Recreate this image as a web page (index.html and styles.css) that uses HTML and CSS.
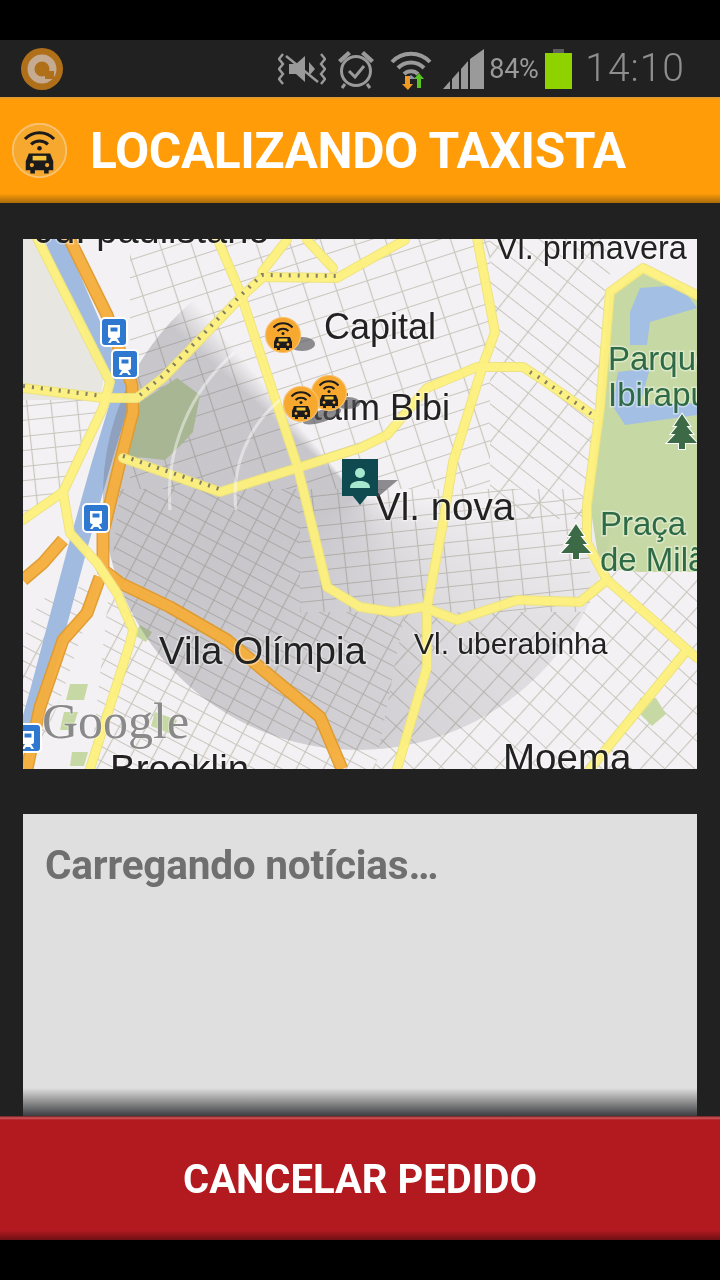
FILE: index.html
```html
<!DOCTYPE html>
<html lang="pt-BR">
<head>
<meta charset="utf-8">
<title>Localizando taxista</title>
<link rel="stylesheet" href="styles.css">
</head>
<body>
<div class="screen">
  <div class="blackbar"></div>
  <div class="status">
    <svg class="status-app" viewBox="0 0 44 44"><circle cx="22" cy="22" r="21" fill="#b0701a"/><circle cx="22" cy="22" r="11" fill="none" stroke="#c4ab92" stroke-width="7"/><path d="M25 24h9v8h-9z" fill="#b0701a"/></svg>
    <div class="status-right">
      <svg class="si si-mute" viewBox="0 0 48 34"><g fill="none" stroke="#9a9a9a" stroke-width="2.4"><path d="M5 2l-4 5 4 5-4 5 4 5-4 5 4 5"/><path d="M43 2l4 5-4 5 4 5-4 5 4 5-4 5"/><path d="M8 4l32 26"/></g><path d="M11 12h7l9-8v26l-9-8h-7z" fill="#9a9a9a"/><path d="M31 10l6 7-6 7z" fill="#9a9a9a"/></svg>
      <svg class="si si-alarm" viewBox="0 0 38 40"><g fill="none" stroke="#9a9a9a" stroke-width="3"><circle cx="19" cy="22" r="14.5"/><path d="M12 22l6 6 9-11"/><path d="M8 35l-3 4M30 35l3 4"/></g><path d="M1 11l10-9 3 3-10 9zM37 11l-10-9-3 3 10 9z" fill="#9a9a9a"/></svg>
      <svg class="si si-wifi" viewBox="0 0 42 42"><g fill="none" stroke="#9a9a9a" stroke-width="4"><path d="M2 14a26 26 0 0 1 38 0"/><path d="M8 20a18 18 0 0 1 26 0"/><path d="M14 26a10 10 0 0 1 14 0"/></g><path d="M21 27l-5 4h10z" fill="#8f8fb0"/><path d="M15 28h5v8h3l-5 6-6-6h3z" fill="#f09a23"/><path d="M27 40v-9h-3l5-6 5 6h-3v9z" fill="#58c322"/></svg>
      <svg class="si si-signal" viewBox="0 0 42 42"><path d="M0 41L7 33v8zM9 41V31l7-8v18zM18 41V21l7-8v28zM27 41V11l14-10v40z" fill="#9a9a9a"/></svg>
      <span class="battery-pct">84%</span>
      <div class="battery"><div class="battery-cap"></div><div class="battery-body"></div></div>
      <span class="clock">14:10</span>
    </div>
  </div>

  <header class="topbar">
    <svg class="topbar-icon" viewBox="-18 -18 36 36"><use href="#taxi" x="-18" y="-18" width="36" height="36"/></svg>
    <h1 class="topbar-title">LOCALIZANDO TAXISTA</h1>
  </header>

  <main class="content">
    <div class="map">
      <svg class="map-layer" viewBox="23 239 674 530">
        <defs>
          <pattern id="gridA" width="62" height="38" patternUnits="userSpaceOnUse" patternTransform="rotate(-18)"><path d="M0 .5H62M0 21.500H62M14.500 0V38M44.500 0V38" class="street"/></pattern>
          <pattern id="gridB" width="42" height="42" patternUnits="userSpaceOnUse" patternTransform="rotate(42)"><path d="M0 .5H42M0 22.500H42M.5 0V42M24.500 0V42" class="street"/></pattern>
          <pattern id="gridC" width="44" height="26" patternUnits="userSpaceOnUse" patternTransform="rotate(28)"><path d="M0 .5H44M0 13.500H44M6.500 0V26M30.500 0V26" class="street"/></pattern>
          <pattern id="gridD" width="38" height="32" patternUnits="userSpaceOnUse" patternTransform="rotate(38)"><path d="M0 .5H38M0 16.500H38M12.500 0V32" class="street"/></pattern>
          <pattern id="gridE" width="50" height="30" patternUnits="userSpaceOnUse" patternTransform="rotate(-6)"><path d="M0 .5H50M0 16.500H50M8.500 0V30M34.500 0V30" class="street"/></pattern>
          <symbol id="taxi" viewBox="-18 -18 36 36" overflow="visible">
            <circle r="17.5" fill="#f7a82f" stroke="#f8c271" stroke-width="1.2"/>
            <g fill="none" stroke="#1b1b1b" stroke-width="2"><path d="M-9.500 -7.500a13 13 0 0 1 19 0"/><path d="M-5.500 -4a8 8 0 0 1 11 0"/></g>
            <circle cy="-1.500" r="1.500" fill="#1b1b1b"/>
            <path d="M-7 2h14l2 5v6h-3v2h-3v-2h-6v2h-3v-2h-3v-6z" fill="#1b1b1b"/>
            <rect x="-4.500" y="3.500" width="9" height="3" fill="#f7c53c"/>
            <circle cx="-5" cy="9.500" r="1.400" fill="#f7a82f"/><circle cx="5" cy="9.500" r="1.400" fill="#f7a82f"/>
          </symbol>
          <symbol id="train" viewBox="-14 -14 28 28" overflow="visible">
            <rect x="-13" y="-14" width="26" height="28" rx="4" fill="#2f78d0" stroke="#fff" stroke-width="2"/>
            <path d="M-6 -7h12v11a2 2 0 0 1-2 2h-8a2 2 0 0 1-2-2z" fill="#fff"/>
            <rect x="-3.500" y="-4.500" width="7" height="4" fill="#2f78d0"/>
            <path d="M-6 11l3-5h6l3 5h-2.500l-1.500-2h-4l-1.500 2z" fill="#fff"/>
          </symbol>
          <symbol id="tree" viewBox="-18 -19 36 38" overflow="visible">
            <path d="M0-17L8-5H4.500L11 3H6.500L15 12H3v6h-6v-6h-12L-6.500 3H-11L-4.500-5H-8z" fill="#3d6a46" stroke="#fff" stroke-width="2" paint-order="stroke"/>
          </symbol>
          <g id="yr" class="road-set">
            <path d="M37 238L110 382L103 408L63 492L40 508L23 520"/>
            <path d="M63 492L70 533L97 563L117 593L133 630L130 643L90 769"/>
            <path d="M23 388L103 398L137 398L163 378L240 298L263 277L337 278L360 265L405 240"/>
            <path d="M217 238L240 292L297 465L307 505L327 587L360 607L393 612L423 607L457 620L517 600L580 602L607 580L697 658"/>
            <path d="M287 240L262 272M307 240L333 268"/>
            <path d="M687 650L590 769"/>
            <path d="M607 580L587 543L587 505L600 408L610 292L643 268L697 295"/>
            <path d="M477 238L495 332L483 365L453 462L443 523L427 607L427 667L397 769"/>
            <path d="M123 458L220 492L297 468L360 448L387 435L427 388L477 367L523 367L540 378L593 415"/>
          </g>
        </defs>

        <rect x="23" y="239" width="674" height="530" class="land"/>
        <path d="M23 239H50L105 370L100 400H23z" class="block-grey"/>
        <rect x="130" y="239" width="360" height="250" fill="url(#gridA)"/>
        <rect x="490" y="239" width="120" height="280" fill="url(#gridD)"/>
        <path d="M23 400H105L60 490L23 520z" fill="url(#gridE)"/>
        <path d="M120 489H300V612H405L375 769H90z" fill="url(#gridC)"/>
        <path d="M300 489H590V612H300z" fill="url(#gridE)"/>
        <path d="M405 612H590L600 570L697 540V769H375z" fill="url(#gridB)"/>
        <path d="M40 600L100 580L60 700L30 769H23V640z" fill="url(#gridC)"/>

        <path d="M600 405L610 295L640 272L697 300V572L640 572L600 568L590 505z" class="park"/>
        <path d="M140 402L177 378L200 395L193 432L178 448L165 460L128 456z" class="park"/>
        <path d="M640 698h16l10 16l-14 12l-14-14z" class="park"/>
        <path d="M140 625l12 7l-6 10l-12-7zM70 684h18l-4 16h-18zM64 712h14l-6 18h-12zM155 712l22 8l-6 14l-20-8zM72 752h16l-4 14h-14z" class="park"/>
        <path d="M630 345L630 312L640 288L680 285L697 308L650 322L647 345z" class="water"/>
        <path d="M618 372L650 368L640 405L697 403V415L625 425L612 405z" class="water"/>
        <path d="M53 236L117 385L120 402L100 468L77 550L40 690L23 750" class="river"/>
      </svg>

      <div class="radar"></div>

      <svg class="map-layer" viewBox="23 239 674 530">
        <g class="roads">
          <g class="highway-case">
            <path d="M68 236L107 315L132 385L133 412L120 462L103 533L103 570L120 583L170 607L227 640L320 717L342 769"/>
            <path d="M100 577L87 613L63 640L40 707L27 769"/>
            <path d="M63 540L43 563L23 580"/>
          </g>
          <g class="highway">
            <path d="M68 236L107 315L132 385L133 412L120 462L103 533L103 570L120 583L170 607L227 640L320 717L342 769"/>
            <path d="M100 577L87 613L63 640L40 707L27 769"/>
            <path d="M63 540L43 563L23 580"/>
          </g>
          <use href="#yr" class="road-case"/>
          <use href="#yr" class="road-fill"/>
          <g class="rail">
            <path d="M23 386L103 396"/>
            <path d="M140 395L163 376L240 296L262 275L337 276"/>
            <path d="M123 456L222 490"/>
            <path d="M530 372L540 378L593 415"/>
          </g>
        </g>
        <g class="rings">
          <path d="M170 510A189 189 0 0 1 235 352"/>
          <path d="M236 510A123 123 0 0 1 280 400"/>
        </g>
        <text x="35" y="243" class="label label-top">Jd. paulistano</text>
        <text x="496" y="259" class="label label-sm">Vl. primavera</text>
        <text x="324" y="339" class="label label-md">Capital</text>
        <text x="302" y="420" class="label label-md">Itaim Bibi</text>
        <text x="375" y="520" class="label label-lg">Vl. nova</text>
        <text x="159" y="664" class="label label-lg">Vila Olímpia</text>
        <text x="414" y="654" class="label label-xs">Vl. uberabinha</text>
        <text x="503" y="771" class="label label-lg">Moema</text>
        <text x="110" y="782" class="label label-lg">Brooklin</text>
        <text x="608" y="370" class="label label-park">Parque</text>
        <text x="608" y="406" class="label label-park">Ibirapuera</text>
        <text x="600" y="535" class="label label-park">Praça</text>
        <text x="600" y="571" class="label label-park">de Milão</text>
        <text x="42" y="738" class="google">Google</text>

        <use href="#train" x="-14" y="-14" width="28" height="28" transform="translate(114 332)"/>
        <use href="#train" x="-14" y="-14" width="28" height="28" transform="translate(125 364)"/>
        <use href="#train" x="-14" y="-14" width="28" height="28" transform="translate(96 518)"/>
        <use href="#train" x="-14" y="-14" width="28" height="28" transform="translate(28 738)"/>
        <use href="#tree" x="-18" y="-19" width="36" height="38" transform="translate(682 431)"/>
        <use href="#tree" x="-18" y="-19" width="36" height="38" transform="translate(576 541)"/>

        <ellipse cx="302" cy="344" rx="13" ry="7" class="pin-shadow"/>
        <ellipse cx="322" cy="416" rx="20" ry="6" class="pin-shadow" transform="rotate(-18 322 416)"/>
        <ellipse cx="348" cy="403" rx="12" ry="6" class="pin-shadow"/>
        <use href="#taxi" x="-18" y="-18" width="36" height="36" transform="translate(329 393)"/>
        <use href="#taxi" x="-18" y="-18" width="36" height="36" transform="translate(301 404)"/>
        <use href="#taxi" x="-18" y="-18" width="36" height="36" transform="translate(283 335)"/>

        <path d="M362 480H398L378 497z" class="pin-shadow"/>
        <rect x="342" y="459" width="36" height="37" class="pin-box"/>
        <path d="M352 495H368L360 505z" class="pin-box"/>
        <circle cx="360" cy="473" r="5" class="pin-person"/>
        <path d="M350 488c0-5 4-7 10-7s10 2 10 7z" class="pin-person"/>
      </svg>
    </div>

    <section class="news">
      <p class="news-text">Carregando notícias…</p>
    </section>
  </main>

  <button class="cancel">CANCELAR PEDIDO</button>
  <div class="blackbar"></div>
</div>
</body>
</html>
```

FILE: styles.css
```css
* { box-sizing: border-box; }
html, body { margin: 0; padding: 0; background: #000; }
.screen {
  width: 720px;
  height: 1280px;
  display: flex;
  flex-direction: column;
  background: #212121;
  font-family: Roboto, "Liberation Sans", sans-serif;
  overflow: hidden;
  filter: blur(0.5px);
}
.blackbar { height: 40px; flex: none; background: #000; }

.status {
  height: 57px;
  flex: none;
  display: flex;
  align-items: center;
  justify-content: space-between;
  padding: 0 35px 0 20px;
  background: #212121;
}
.status-app { width: 44px; height: 44px; }
.status-right { display: flex; align-items: center; }
.si { display: block; flex: none; }
.si-mute { width: 48px; height: 34px; margin-right: 11px; }
.si-alarm { width: 38px; height: 40px; margin-right: 15px; }
.si-wifi { width: 42px; height: 42px; margin-right: 11px; }
.si-signal { width: 42px; height: 42px; margin-right: 4px; }
.battery-pct { font-size: 27px; color: #9a9a9a; margin-right: 6px; width: 50px; letter-spacing: -0.3px; }
.battery { width: 27px; margin-right: 13px; display: flex; flex-direction: column; align-items: center; }
.battery-cap { width: 11px; height: 4px; background: #5d5d5d; }
.battery-body { width: 27px; height: 36px; background: #8ed300; }
.clock { font-size: 39px; font-weight: 300; color: #8e8e8e; letter-spacing: 1px; line-height: 1; }

.topbar {
  height: 106px;
  flex: none;
  display: flex;
  align-items: center;
  gap: 23px;
  padding: 1px 0 0 12px;
  background: linear-gradient(#d99a3a 0, #ff9c08 3px, #ff9c08 91%, #a96c0a 100%);
}
.topbar-icon { width: 55px; height: 55px; flex: none; }
.topbar-title {
  margin: 0;
  font-size: 49.700px;
  font-weight: 700;
  color: #fff;
  letter-spacing: -0.4px;
  white-space: nowrap;
}

.content {
  flex: 1;
  min-height: 0;
  display: flex;
  flex-direction: column;
  gap: 45px;
  padding: 36px 23px 0;
}
.map {
  position: relative;
  height: 530px;
  flex: none;
  overflow: hidden;
  background: #f1eff0;
}
.map-layer { position: absolute; inset: 0; width: 674px; height: 530px; display: block; }
.land { fill: #f3f1f3; }
.block-grey { fill: #e8e6e0; }
.street { fill: none; stroke: #c9c6bd; stroke-width: 1.200; }
.park { fill: #c6d9a4; }
.water { fill: #a3bfe4; }
.river { fill: none; stroke: #a1bbe0; stroke-width: 19; }
.roads { opacity: 0.95; }
.highway-case { fill: none; stroke: #e09a2c; stroke-width: 13; stroke-linejoin: round; }
.highway { fill: none; stroke: #f6ae3a; stroke-width: 10; stroke-linejoin: round; }
.road-set { fill: none; stroke-linejoin: round; stroke-linecap: round; }
.road-case { stroke: #ede27c; stroke-width: 10; }
.road-fill { stroke: #fdf17c; stroke-width: 8; }
.rail { fill: none; stroke: #7f7b5c; stroke-width: 4; stroke-dasharray: 2 7; }

.radar {
  position: absolute;
  left: 80px;
  top: 1px;
  width: 510px;
  height: 510px;
  border-radius: 50%;
  background: conic-gradient(from 0deg,
    rgba(100, 100, 110, 0) 0deg,
    rgba(100, 100, 110, 0) 90deg,
    rgba(100, 100, 110, 0.1) 120deg,
    rgba(100, 100, 110, 0.22) 170deg,
    rgba(100, 100, 110, 0.3) 240deg,
    rgba(100, 100, 110, 0.3) 312deg,
    rgba(100, 100, 110, 0) 320deg);
}
.rings { fill: none; stroke: #fff; stroke-width: 3; opacity: 0.45; }

.label { font-family: "Liberation Sans", Arial, sans-serif; font-size: 35.500px; fill: #222; stroke: #fff; stroke-opacity: 0.4; stroke-width: 3px; paint-order: stroke; }
.label-top { font-size: 38px; }
.label-md { font-size: 36px; }
.label-lg { font-size: 38.500px; }
.label-sm { font-size: 32.400px; }
.label-xs { font-size: 30px; }
.label-park { font-size: 33px; fill: #2d6a45; }
.google { font-family: "Liberation Serif", serif; font-size: 50px; fill: #8a8a8a; stroke: #fff; stroke-opacity: 0.35; stroke-width: 2px; paint-order: stroke; }
.pin-shadow { fill: #55555a; opacity: 0.65; }
.pin-box { fill: #0e4a50; }
.pin-person { fill: #a6e8cf; }

.news {
  flex: 1;
  min-height: 0;
  background: linear-gradient(#dfdfdf 0, #dfdfdf 274px, #9a9a9a 286px, #3b3d42 302px);
  padding: 27px 22px;
}
.news-text { margin: 0; font-size: 40.500px; font-weight: 700; color: #6f6f6f; letter-spacing: -0.2px; }

.cancel {
  height: 124px;
  flex: none;
  border: 0;
  padding: 2px 0 0;
  width: 100%;
  font-family: inherit;
  font-size: 40px;
  font-weight: 700;
  color: #fff;
  background: linear-gradient(#6e1a1a 0, #cc5a5e 2px, #b31a20 4px, #b31a20 92%, #6e1014 100%);
}
```
